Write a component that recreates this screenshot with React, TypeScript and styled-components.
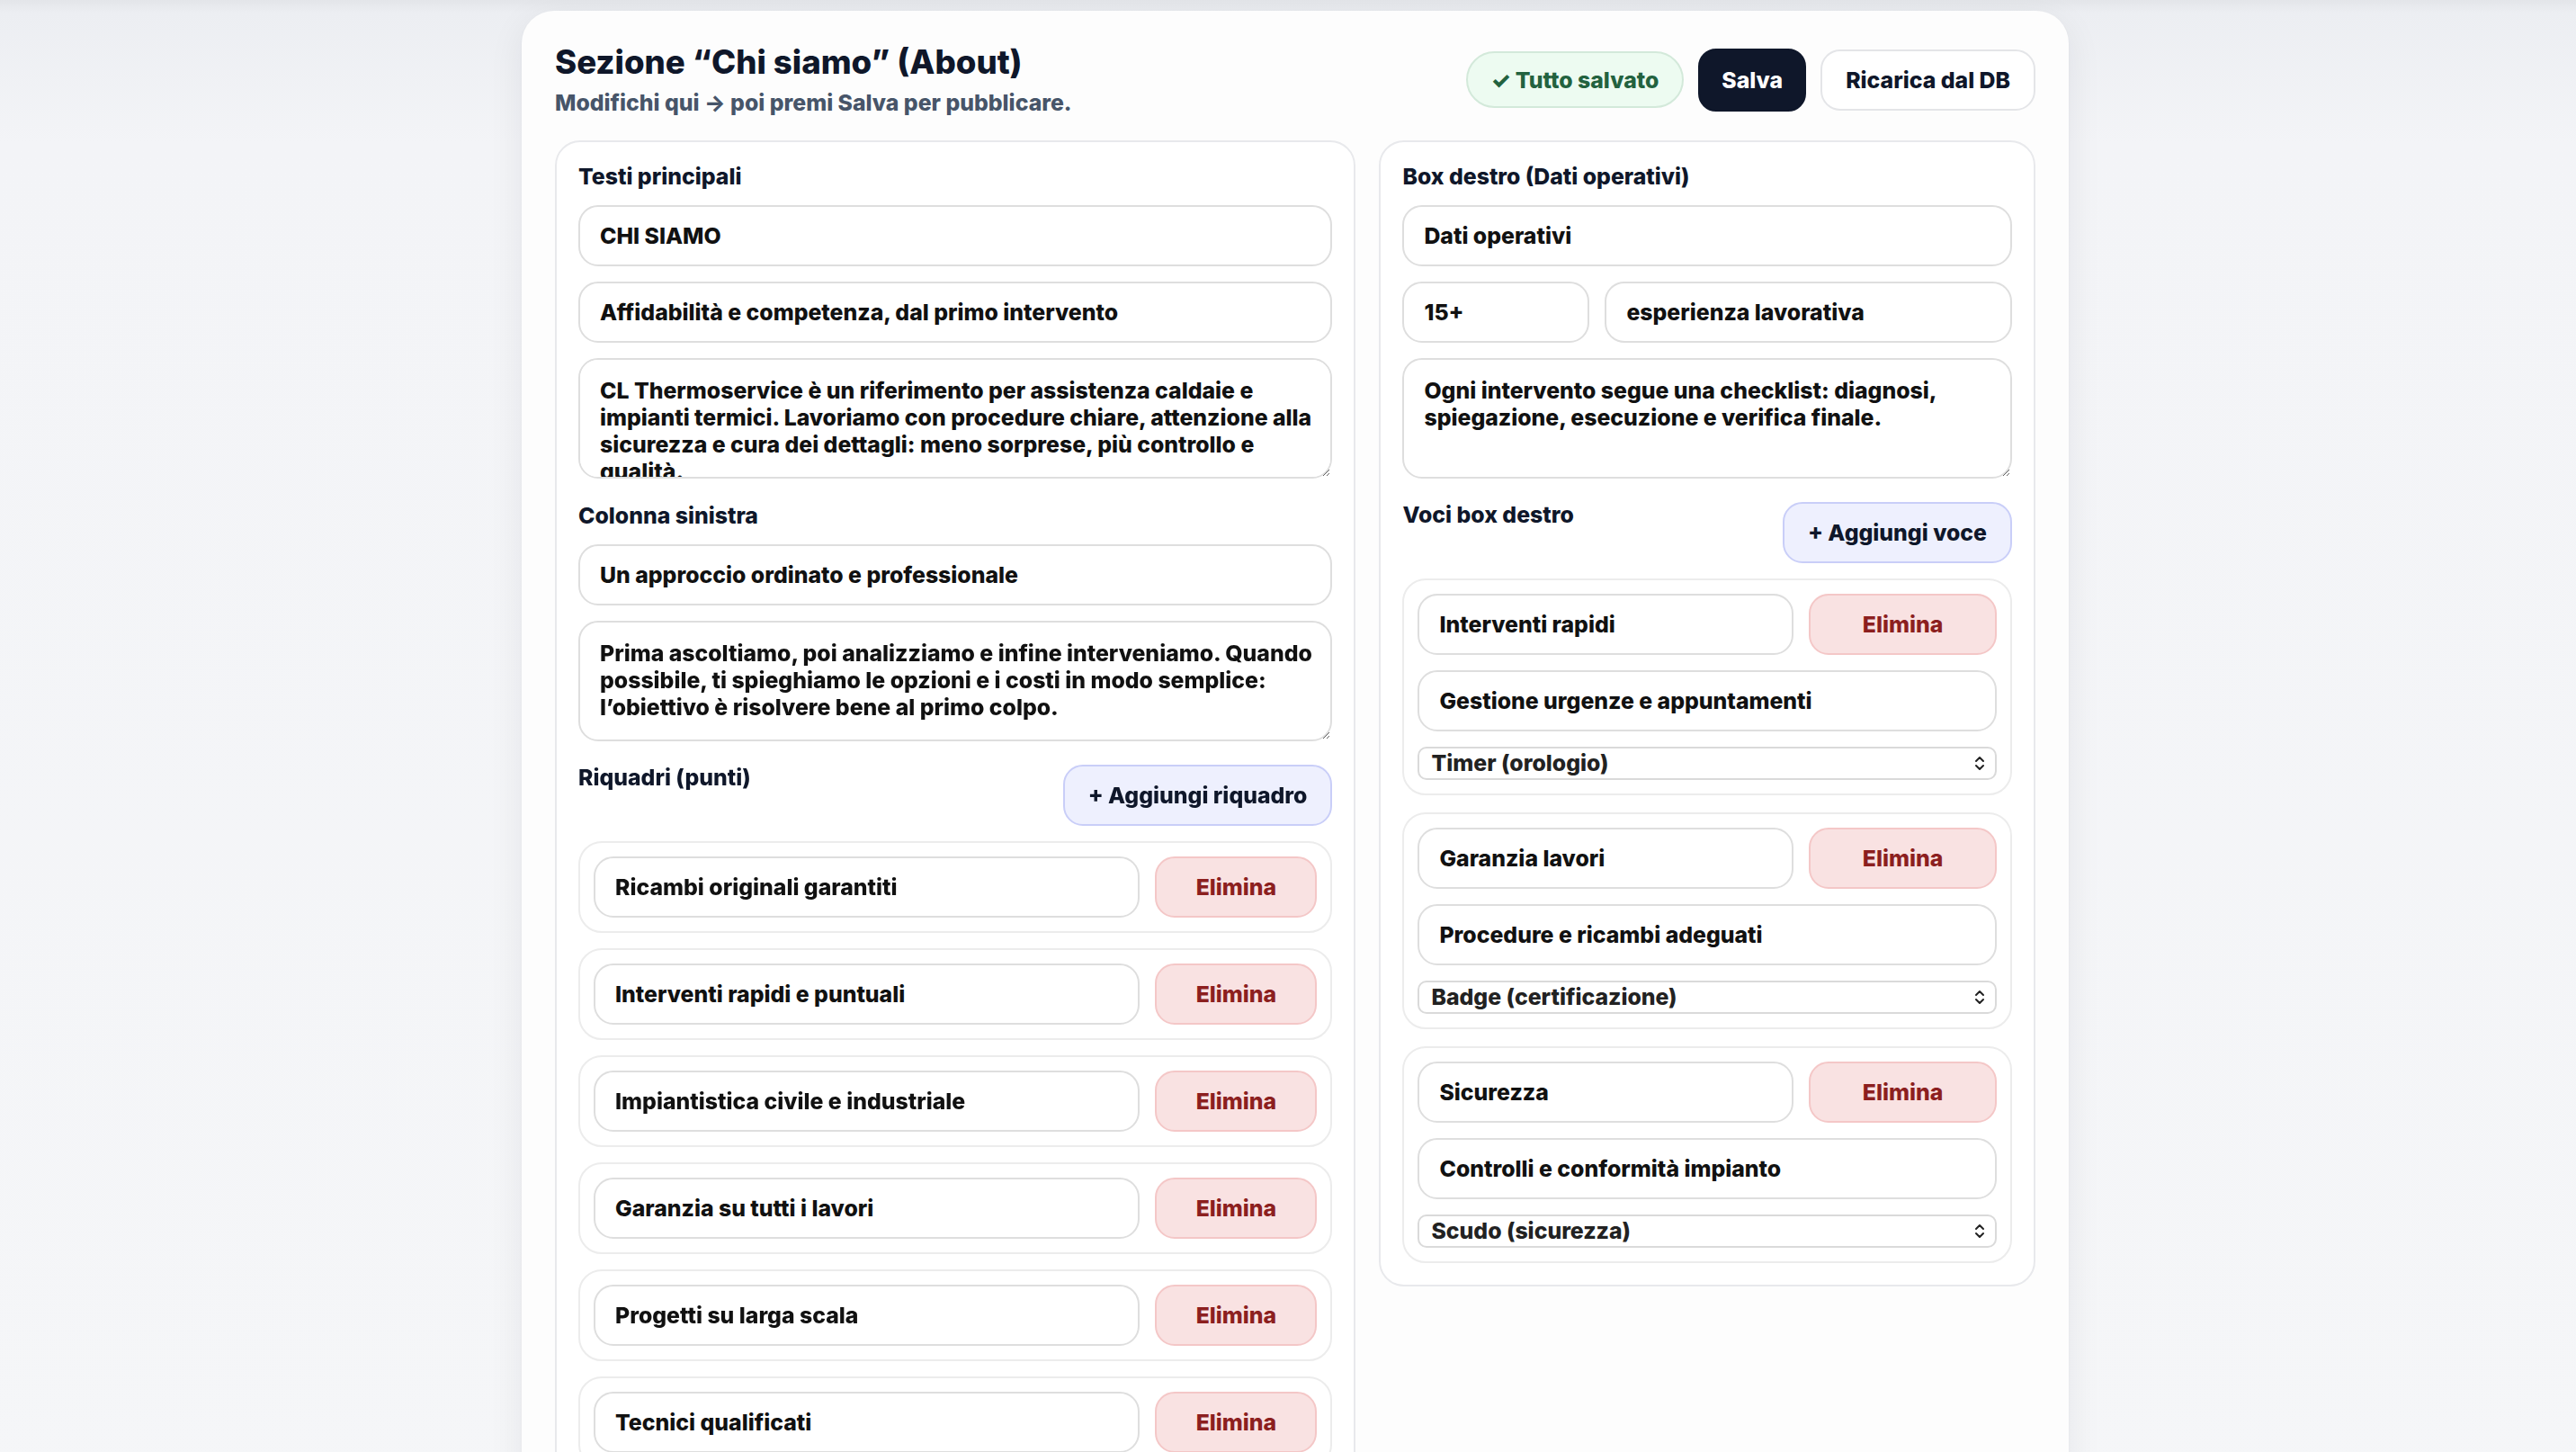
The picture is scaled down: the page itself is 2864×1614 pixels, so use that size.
import styled, { createGlobalStyle } from "styled-components";

const GlobalStyle = createGlobalStyle`
  body {
    margin: 0;
    font-family: Inter, "Noto Sans", "Liberation Sans", sans-serif;
    background: linear-gradient(180deg, #e3e5e9 0px, #eceef2 14px, #f3f4f7 160px, #f5f6f8 100%);
    color: #0f172a;
  }
  * {
    box-sizing: border-box;
  }
`;

const Page = styled.div`
  display: flex;
  justify-content: center;
  padding: 12px 0 0 16px;
`;

const Card = styled.div`
  width: 1720px;
  padding: 36px 37px 40px;
  border-radius: 36px;
  background: #fdfdfd;
  box-shadow: 0 10px 40px rgba(15, 23, 42, 0.07), 0 1px 3px rgba(15, 23, 42, 0.04);
`;

const Header = styled.header`
  display: flex;
  justify-content: space-between;
  align-items: center;
  margin-bottom: 26px;
`;

const Title = styled.h1`
  margin: 0;
  font-size: 36.6px;
  line-height: 1.2;
  font-weight: 800;
  color: #0f172a;
`;

const Subtitle = styled.p`
  margin: 7px 0 0;
  font-size: 24.8px;
  line-height: 31px;
  font-weight: 800;
  color: #475569;
`;

const Actions = styled.div`
  display: flex;
  align-items: center;
  gap: 16px;
`;

const StatusPill = styled.span`
  display: inline-flex;
  align-items: center;
  height: 63px;
  padding: 0 26px;
  border-radius: 999px;
  border: 2px solid #d3e9da;
  background: #edfbf1;
  color: #23623f;
  font-size: 24.8px;
  font-weight: 800;
`;

const Button = styled.button<{ $variant?: "dark" | "ghost" | "add" | "danger" }>`
  height: ${(p) => (p.$variant === "dark" ? "70px" : "68px")};
  padding: 0 ${(p) => (p.$variant === "dark" ? "24px" : "26px")};
  border-radius: ${(p) => (p.$variant === "dark" ? "20px" : "22px")};
  font-family: inherit;
  font-size: 24.8px;
  font-weight: 800;
  cursor: pointer;
  white-space: nowrap;
  border: 2px solid
    ${(p) =>
      p.$variant === "dark"
        ? "#0f172a"
        : p.$variant === "add"
        ? "#c9cef8"
        : p.$variant === "danger"
        ? "#f4c7c7"
        : "#e4e5e8"};
  background: ${(p) =>
    p.$variant === "dark"
      ? "#0f172a"
      : p.$variant === "add"
      ? "#eef0fe"
      : p.$variant === "danger"
      ? "#f9e2e2"
      : "#ffffff"};
  color: ${(p) =>
    p.$variant === "dark" ? "#ffffff" : p.$variant === "danger" ? "#8c1f1f" : "#0f172a"};
`;

const Columns = styled.div`
  display: grid;
  grid-template-columns: minmax(0, 891fr) minmax(0, 730fr);
  gap: 26px;
  align-items: start;
`;

const Panel = styled.section`
  display: flex;
  flex-direction: column;
  gap: 17px;
  padding: 24px;
  border: 2px solid #e8e9ec;
  border-radius: 28px;
  background: #ffffff;
`;

const Label = styled.div<{ $spaced?: boolean }>`
  font-size: 24.8px;
  line-height: 29px;
  font-weight: 800;
  color: #0f172a;
  margin-top: ${(p) => (p.$spaced ? "10px" : "0")};
`;

const SectionHead = styled.div`
  display: flex;
  justify-content: space-between;
  align-items: flex-start;
  margin-top: 9px;
`;

const Field = styled.input`
  width: 100%;
  height: 68px;
  padding: 0 22px;
  border: 2px solid #dedede;
  border-radius: 22px;
  background: #fff;
  font-family: inherit;
  font-size: 24.8px;
  font-weight: 800;
  color: #111;
  outline: none;
`;

const TextArea = styled.textarea`
  width: 100%;
  height: 134px;
  padding: 19px 14px 19px 22px;
  border: 2px solid #dedede;
  border-radius: 22px;
  background: #fff;
  font-family: inherit;
  font-size: 24.8px;
  line-height: 30px;
  font-weight: 800;
  color: #111;
  resize: vertical;
  outline: none;
  scrollbar-width: none;
  &::-webkit-scrollbar {
    display: none;
  }
`;

const SplitRow = styled.div<{ $cols: string }>`
  display: grid;
  grid-template-columns: ${(p) => p.$cols};
  gap: 17px;
`;

const List = styled.div<{ $gap: number }>`
  display: flex;
  flex-direction: column;
  gap: ${(p) => p.$gap}px;
`;

const ItemCard = styled.div`
  display: flex;
  flex-direction: column;
  gap: 17px;
  padding: 15px;
  border: 2px solid #ececec;
  border-radius: 26px;
  background: #fff;
`;

const SelectWrap = styled.div`
  position: relative;
  svg {
    position: absolute;
    right: 12px;
    top: 8px;
    pointer-events: none;
  }
`;

const Select = styled.select`
  width: 100%;
  height: 37px;
  padding: 0 40px 0 13px;
  border: 2px solid #dadada;
  border-radius: 10px;
  background: #fff;
  appearance: none;
  font-family: inherit;
  font-size: 24.8px;
  font-weight: 800;
  color: #222;
  outline: none;
`;

const riquadri = [
  "Ricambi originali garantiti",
  "Interventi rapidi e puntuali",
  "Impiantistica civile e industriale",
  "Garanzia su tutti i lavori",
  "Progetti su larga scala",
  "Tecnici qualificati",
];

const iconOptions = [
  "Timer (orologio)",
  "Badge (certificazione)",
  "Scudo (sicurezza)",
  "Chiave (assistenza)",
];

const voci = [
  { title: "Interventi rapidi", text: "Gestione urgenze e appuntamenti", icon: "Timer (orologio)" },
  { title: "Garanzia lavori", text: "Procedure e ricambi adeguati", icon: "Badge (certificazione)" },
  { title: "Sicurezza", text: "Controlli e conformità impianto", icon: "Scudo (sicurezza)" },
];

function UpDown() {
  return (
    <svg width="14" height="21" viewBox="0 0 14 21" fill="none">
      <path d="M3 8 L7 4 L11 8" stroke="#222" strokeWidth="2" strokeLinecap="round" strokeLinejoin="round" />
      <path d="M3 13 L7 17 L11 13" stroke="#222" strokeWidth="2" strokeLinecap="round" strokeLinejoin="round" />
    </svg>
  );
}

function App() {
  return (
    <>
      <GlobalStyle />
      <Page>
        <Card>
          <Header>
            <div>
              <Title>Sezione “Chi siamo” (About)</Title>
              <Subtitle>Modifichi qui → poi premi Salva per pubblicare.</Subtitle>
            </div>
            <Actions>
              <StatusPill>✓ Tutto salvato</StatusPill>
              <Button $variant="dark">Salva</Button>
              <Button $variant="ghost">Ricarica dal DB</Button>
            </Actions>
          </Header>

          <Columns>
            <Panel>
              <Label>Testi principali</Label>
              <Field defaultValue="CHI SIAMO" />
              <Field defaultValue="Affidabilità e competenza, dal primo intervento" />
              <TextArea
                rows={3}
                defaultValue="CL Thermoservice è un riferimento per assistenza caldaie e impianti termici. Lavoriamo con procedure chiare, attenzione alla sicurezza e cura dei dettagli: meno sorprese, più controllo e qualità."
              />

              <Label $spaced>Colonna sinistra</Label>
              <Field defaultValue="Un approccio ordinato e professionale" />
              <TextArea
                rows={3}
                defaultValue="Prima ascoltiamo, poi analizziamo e infine interveniamo. Quando possibile, ti spieghiamo le opzioni e i costi in modo semplice: l’obiettivo è risolvere bene al primo colpo."
              />

              <SectionHead>
                <Label>Riquadri (punti)</Label>
                <Button $variant="add">+ Aggiungi riquadro</Button>
              </SectionHead>
              <List $gap={17}>
                {riquadri.map((r) => (
                  <ItemCard key={r}>
                    <SplitRow $cols="1fr 180px">
                      <Field defaultValue={r} />
                      <Button $variant="danger">Elimina</Button>
                    </SplitRow>
                  </ItemCard>
                ))}
              </List>
            </Panel>

            <Panel>
              <Label>Box destro (Dati operativi)</Label>
              <Field defaultValue="Dati operativi" />
              <SplitRow $cols="208px 1fr">
                <Field defaultValue="15+" />
                <Field defaultValue="esperienza lavorativa" />
              </SplitRow>
              <TextArea
                rows={3}
                defaultValue="Ogni intervento segue una checklist: diagnosi, spiegazione, esecuzione e verifica finale."
              />

              <SectionHead>
                <Label>Voci box destro</Label>
                <Button $variant="add">+ Aggiungi voce</Button>
              </SectionHead>
              <List $gap={19}>
                {voci.map((v) => (
                  <ItemCard key={v.title}>
                    <SplitRow $cols="2fr 1fr">
                      <Field defaultValue={v.title} />
                      <Button $variant="danger">Elimina</Button>
                    </SplitRow>
                    <Field defaultValue={v.text} />
                    <SelectWrap>
                      <Select defaultValue={v.icon}>
                        {iconOptions.map((o) => (
                          <option key={o}>{o}</option>
                        ))}
                      </Select>
                      <UpDown />
                    </SelectWrap>
                  </ItemCard>
                ))}
              </List>
            </Panel>
          </Columns>
        </Card>
      </Page>
    </>
  );
}

export default App;
